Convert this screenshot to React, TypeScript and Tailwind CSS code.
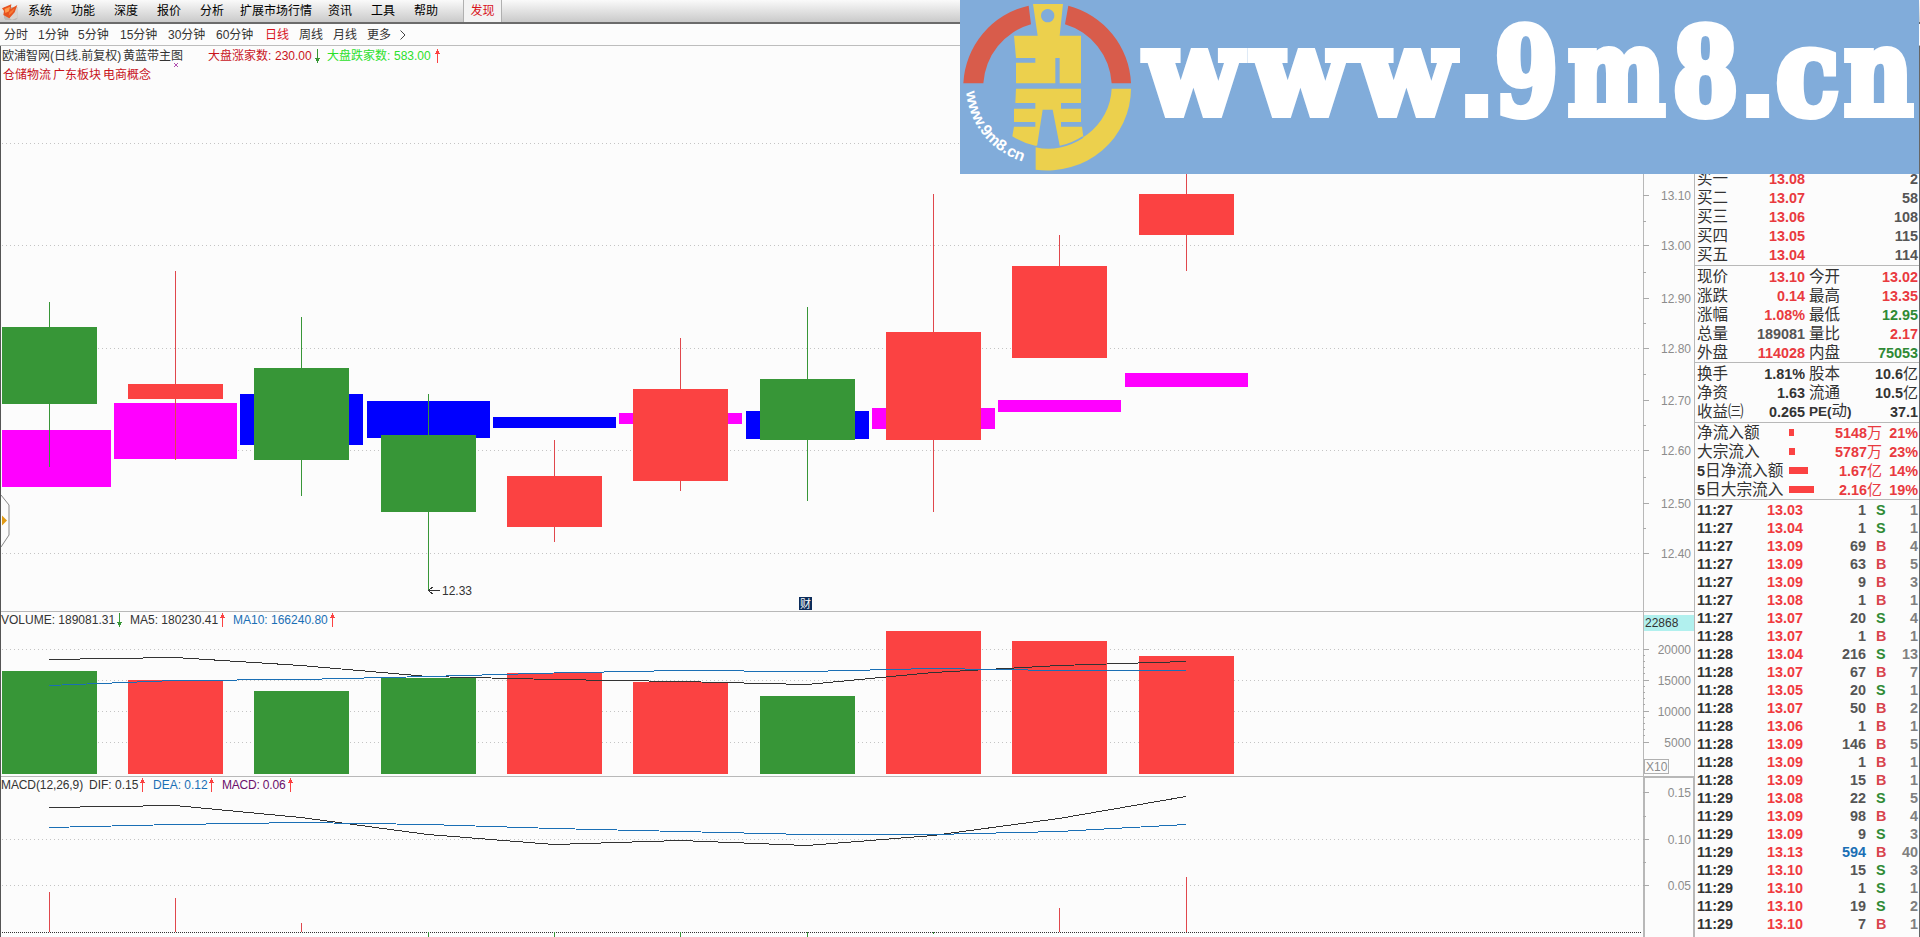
import clsx from "clsx";

const RED = "#fb4242";
const GREEN = "#379637";
const MAGENTA = "#ff00ff";
const BLUE = "#0000ff";

const menuItems = ["系统", "功能", "深度", "报价", "分析", "扩展市场行情", "资讯", "工具", "帮助"];

const periods = ["分时", "1分钟", "5分钟", "15分钟", "30分钟", "60分钟", "日线", "周线", "月线", "更多"];

// x = center, body/wick/band are [top, bottom] in page pixels
const candles = [
  { x: 49, up: false, body: [327, 404], wick: [302, 467], band: [430, 487], bandColor: MAGENTA, vol: 671, macd: [892, 932] },
  { x: 175, up: true, body: [384, 399], wick: [271, 460], band: [403, 459], bandColor: MAGENTA, vol: 680, macd: [898, 932] },
  { x: 301, up: false, body: [368, 460], wick: [317, 496], band: [394, 445], bandColor: BLUE, vol: 691, macd: [923, 932] },
  { x: 428, up: false, body: [435, 512], wick: [394, 591], band: [401, 438], bandColor: BLUE, vol: 678, macd: [932, 937] },
  { x: 554, up: true, body: [476, 527], wick: [440, 542], band: [417, 428], bandColor: BLUE, vol: 673, macd: [932, 937] },
  { x: 680, up: true, body: [389, 481], wick: [338, 491], band: [413, 424], bandColor: MAGENTA, vol: 682, macd: [932, 937] },
  { x: 807, up: false, body: [379, 440], wick: [307, 501], band: [411, 439], bandColor: BLUE, vol: 696, macd: [932, 937] },
  { x: 933, up: true, body: [332, 440], wick: [194, 512], band: [408, 429], bandColor: MAGENTA, vol: 631, macd: [932, 934] },
  { x: 1059, up: true, body: [266, 358], wick: [235, 358], band: [400, 412], bandColor: MAGENTA, vol: 641, macd: [908, 932] },
  { x: 1186, up: true, body: [194, 235], wick: [140, 271], band: [373, 387], bandColor: MAGENTA, vol: 656, macd: [877, 932] },
];

const ma5 = [659.5, 657.5, 665.5, 676.5, 679.5, 681.5, 684.5, 672.5, 665.5, 661.5];
const ma10 = [685.5, 680.5, 679.5, 676.5, 673, 670.5, 671.5, 668.5, 670.5, 670.5];
const dif = [807.5, 805.5, 817.5, 834.5, 844.5, 840.5, 845.5, 835.5, 818.5, 796.5];
const dea = [827.5, 824.5, 822.5, 824.5, 828.5, 831.5, 834.5, 834.5, 831.5, 824.5];

const toPoints = (ys: number[]) => ys.map((y, i) => `${candles[i].x},${y}`).join(" ");

const priceAxis: [string, number][] = [
  ["13.10", 195],
  ["13.00", 245],
  ["12.90", 298],
  ["12.80", 348],
  ["12.70", 400],
  ["12.60", 450],
  ["12.50", 503],
  ["12.40", 553],
];
const volAxis: [string, number][] = [
  ["20000", 649],
  ["15000", 680],
  ["10000", 711],
  ["5000", 742],
];
const macdAxis: [string, number][] = [
  ["0.15", 792],
  ["0.10", 839],
  ["0.05", 885],
];

const bids = [
  ["买一", "13.08", "2"],
  ["买二", "13.07", "58"],
  ["买三", "13.06", "108"],
  ["买四", "13.05", "115"],
  ["买五", "13.04", "114"],
];

const red = "text-[#e93a3f]";
const green = "text-[#2f8a35]";
const dark = "text-[#333]";

const quotes = [
  ["现价", "13.10", red, "今开", "13.02", red],
  ["涨跌", "0.14", red, "最高", "13.35", red],
  ["涨幅", "1.08%", red, "最低", "12.95", green],
  ["总量", "189081", "text-[#555]", "量比", "2.17", red],
  ["外盘", "114028", red, "内盘", "75053", green],
];

const basics = [
  ["换手", "1.81%", dark, "股本", "10.6亿", dark],
  ["净资", "1.63", dark, "流通", "10.5亿", dark],
  ["收益㈢", "0.265", dark, "PE(动)", "37.1", dark],
];

const flows = [
  { label: "净流入额", width: 5, value: "5148", unit: "万", pct: "21%" },
  { label: "大宗流入", width: 6, value: "5787", unit: "万", pct: "23%" },
  { label: "日净流入额", five: true, width: 19, value: "1.67", unit: "亿", pct: "14%" },
  { label: "日大宗流入", five: true, width: 25, value: "2.16", unit: "亿", pct: "19%" },
];

const ticks: [string, string, string, string, string][] = [
  ["11:27", "13.03", "1", "S", "1"],
  ["11:27", "13.04", "1", "S", "1"],
  ["11:27", "13.09", "69", "B", "4"],
  ["11:27", "13.09", "63", "B", "5"],
  ["11:27", "13.09", "9", "B", "3"],
  ["11:27", "13.08", "1", "B", "1"],
  ["11:27", "13.07", "20", "S", "4"],
  ["11:28", "13.07", "1", "B", "1"],
  ["11:28", "13.04", "216", "S", "13"],
  ["11:28", "13.07", "67", "B", "7"],
  ["11:28", "13.05", "20", "S", "1"],
  ["11:28", "13.07", "50", "B", "2"],
  ["11:28", "13.06", "1", "B", "1"],
  ["11:28", "13.09", "146", "B", "5"],
  ["11:28", "13.09", "1", "B", "1"],
  ["11:28", "13.09", "15", "B", "1"],
  ["11:29", "13.08", "22", "S", "5"],
  ["11:29", "13.09", "98", "B", "4"],
  ["11:29", "13.09", "9", "S", "3"],
  ["11:29", "13.13", "594", "B", "40"],
  ["11:29", "13.10", "15", "S", "3"],
  ["11:29", "13.10", "1", "S", "1"],
  ["11:29", "13.10", "19", "S", "2"],
  ["11:29", "13.10", "7", "B", "1"],
];

const Arrow = ({ down = false }: { down?: boolean }) => (
  <svg className="h-[14px] w-[5px] shrink-0" viewBox="0 0 5 14" shapeRendering="crispEdges">
    {down ? (
      <path d="M2 0h1v14h-1zM0 9h5v1h-5zM1 10h3v2h-3z" fill={GREEN} />
    ) : (
      <path d="M2 0h1v14h-1zM1 2h3v2h-3zM0 4h5v1h-5z" fill={RED} />
    )}
  </svg>
);

const GridLine = ({ y }: { y: number }) => (
  <line x1="2" x2="1640" y1={y + 0.5} y2={y + 0.5} stroke="#c4c4c4" strokeDasharray="1 3" />
);

const MenuBar = () => (
  <div className="flex h-6 items-center border-b-2 border-[#6b6b6b] bg-gradient-to-b from-[#fafafa] to-[#cacaca] text-xs text-black">
    <svg className="ml-[2px] h-[17px] w-4" viewBox="0 0 48 51">
      <path d="M6 12h40v34l-4 5H10l-4-6z" fill="#bdb9b5" />
      <path d="M40 10l6 4v30l-16 6-8-4z" fill="#d8d4d0" />
      <path d="M0 16L28 4l-2 14L46 6 38 28 22 46 4 36l2-12z" fill="#e8531f" />
      <path d="M8 18l16-7-3 14-11 5z" fill="#ff9a4e" />
      <path d="M22 28l16-12-6 12-12 10z" fill="#f67a35" />
    </svg>
    <div className="ml-[10px] grid grid-cols-[43px_43px_43px_43px_40px_88px_43px_43px_49px]">
      {menuItems.map((m) => (
        <span key={m}>{m}</span>
      ))}
    </div>
    <div className="flex h-full w-[39px] items-center justify-center border-x border-[#b0b0b0] bg-[#f3f3f3] text-[#d8141c]">
      发现
    </div>
  </div>
);

const PeriodBar = () => (
  <div className="flex h-[22px] items-center border-b border-[#bdbdbd] pl-1 text-xs text-[#333]">
    <div className="grid grid-cols-[34px_40px_42px_48px_48px_49px_34px_34px_34px_33px]">
      {periods.map((p) => (
        <span key={p} className={clsx(p === "日线" && "text-[#d8141c]")}>
          {p}
        </span>
      ))}
    </div>
    <svg className="h-[10px] w-[6px]" viewBox="0 0 6 10" fill="none" stroke="#444">
      <path d="M0.5 0.5L5 5L0.5 9.5" />
    </svg>
  </div>
);

const PricePane = () => (
  <div className="relative h-[566px] border-b border-[#b8b8b8]">
    <svg className="absolute inset-0" width="1642" height="565" viewBox="1 46 1642 565" shapeRendering="crispEdges">
      {[143, 245, 348, 450, 553].map((y) => (
        <GridLine key={y} y={y} />
      ))}
      {candles.map((c, i) => {
        const color = c.up ? RED : GREEN;
        const bandLeft = i === 0 ? 2 : c.x - 61;
        return (
          <g key={c.x}>
            <rect x={bandLeft} y={c.band[0]} width={c.x + 62 - bandLeft} height={c.band[1] - c.band[0]} fill={c.bandColor} />
            <rect x={c.x} y={c.wick[0]} width="1" height={c.wick[1] - c.wick[0]} fill={c.up ? "#e0474c" : color} />
            <rect x={c.x - 47} y={c.body[0]} width="95" height={c.body[1] - c.body[0]} fill={color} />
          </g>
        );
      })}
      {/* lowest price marker */}
      <path d="M429 590.5h11M432.5 587l-4 3.5 4 3.5" fill="none" stroke="#333" />
      <text x="442" y="595" fontSize="12" fill="#333">12.33</text>
      <rect x="799" y="597" width="13" height="13" fill="#0d2c5a" />
      <text x="800" y="608" fontSize="11" fill="#fff">财</text>
      {/* side drawer handle */}
      <path d="M1 495l8 10v30l-8 12" fill="#fcfcfc" stroke="#888" shapeRendering="auto" />
      <path d="M2 515.5l5 5-5 5z" fill="#e09a14" shapeRendering="auto" />
      <path d="M174 63l4 4M178 63l-4 4" stroke="#b050b0" shapeRendering="auto" />
    </svg>
    <div className="relative flex h-[19px] items-center pt-px text-xs text-[#333]">
      <span className="w-[122px] whitespace-nowrap pl-px">欧浦智网(日线.前复权)</span>
      <span className="w-[85px]">黄蓝带主图</span>
      <span className="w-[67px] text-[#c8141c]">大盘涨家数:</span>
      <span className="w-[40px] text-[#c8141c]">230.00</span>
      <Arrow down />
      <span className="ml-[7px] w-[67px] text-[#2be02b]">大盘跌家数:</span>
      <span className="w-[41px] text-[#2be02b]">583.00</span>
      <Arrow />
    </div>
    <div className="relative flex h-[19px] items-center gap-[2px] pl-[2px] text-xs text-[#c8141c]">
      <span>仓储物流</span>
      <span>广东板块</span>
      <span>电商概念</span>
    </div>
  </div>
);

const VolumePane = () => (
  <div className="relative h-[165px] border-b border-[#b8b8b8]">
    <svg className="absolute inset-0" width="1642" height="164" viewBox="1 612 1642 164" shapeRendering="crispEdges">
      {volAxis.map(([label, y]) => (
        <GridLine key={label} y={y} />
      ))}
      {candles.map((c) => (
        <rect key={c.x} x={c.x - 47} y={c.vol} width="95" height={774 - c.vol} fill={c.up ? RED : GREEN} />
      ))}
      <polyline points={toPoints(ma5)} fill="none" stroke="#333" />
      <polyline points={toPoints(ma10)} fill="none" stroke="#1a6fb5" />
    </svg>
    <div className="relative flex h-4 items-center whitespace-nowrap text-xs text-[#333]">
      <span className="w-[116px]">VOLUME: 189081.31</span>
      <Arrow down />
      <span className="ml-2 w-[90px]">MA5: 180230.41</span>
      <Arrow />
      <span className="ml-2 w-[97px] text-[#1a6fb5]">MA10: 166240.80</span>
      <Arrow />
    </div>
  </div>
);

const MacdPane = () => (
  <div className="relative h-[160px]">
    <svg className="absolute inset-0" width="1642" height="160" viewBox="1 777 1642 160" shapeRendering="crispEdges">
      <GridLine y={839} />
      <GridLine y={885} />
      <line x1="2" x2="1642" y1="932.5" y2="932.5" stroke="#333" strokeDasharray="1 1" />
      {candles.map((c) => (
        <rect
          key={c.x}
          x={c.x}
          y={c.macd[0]}
          width="1"
          height={c.macd[1] - c.macd[0]}
          fill={c.macd[0] >= 932 ? GREEN : "#e0474c"}
        />
      ))}
      <polyline points={toPoints(dif)} fill="none" stroke="#333" />
      <polyline points={toPoints(dea)} fill="none" stroke="#1a6fb5" />
    </svg>
    <div className="relative flex h-4 items-center whitespace-nowrap text-xs text-[#333]">
      <span className="w-[88px] tracking-[-0.1px]">MACD(12,26,9)</span>
      <span className="w-[51px]">DIF: 0.15</span>
      <Arrow />
      <span className="ml-2 w-[56px] text-[#1a6fb5]">DEA: 0.12</span>
      <Arrow />
      <span className="ml-2 w-[66px] tracking-[-0.2px] text-[#6b0f6b]">MACD: 0.06</span>
      <Arrow />
    </div>
  </div>
);

const AxisLabels = ({ items }: { items: [string, number][] }) => (
  <>
    {items.map(([label, y]) => (
      <g key={label}>
        <rect x="1640" y={y} width="9" height="1" fill="#aaa" />
        <text x="1691" y={y + 5} fontSize="12" textAnchor="end" fill="#8c8c8c">
          {label}
        </text>
      </g>
    ))}
  </>
);

const AxisColumn = () => (
  <svg className="shrink-0" width="51" height="891" viewBox="1643 46 51 891" shapeRendering="crispEdges">
    <rect x="1643" y="46" width="1" height="891" fill="#b8b8b8" />
    <rect x="1643" y="611" width="51" height="1" fill="#b8b8b8" />
    <AxisLabels items={priceAxis} />
    {[221, 272, 323, 374, 425, 477, 528].map((y) => (
      <rect key={y} x="1643" y={y} width="3" height="1" fill="#aaa" />
    ))}
    <rect x="1644" y="615" width="50" height="16" fill="#b1f0ee" />
    <text x="1645" y="627" fontSize="12" fill="#333">22868</text>
    <AxisLabels items={volAxis} />
    {[655, 661, 667, 673, 686, 692, 698, 704, 717, 723, 729, 735].map((y) => (
      <rect key={y} x="1643" y={y} width="2" height="1" fill="#aaa" />
    ))}
    <rect x="1644.5" y="759.5" width="24" height="14" fill="none" stroke="#b0b0b0" />
    <text x="1646" y="771" fontSize="12" fill="#8c8c8c">X10</text>
    <rect x="1643" y="776" width="51" height="2" fill="#b8b8b8" />
    <rect x="1643" y="776" width="2" height="161" fill="#b8b8b8" />
    <rect x="1693" y="776" width="1" height="161" fill="#b8b8b8" />
    <AxisLabels items={macdAxis} />
    {[816, 862].map((y) => (
      <rect key={y} x="1643" y={y} width="3" height="1" fill="#aaa" />
    ))}
  </svg>
);

const PairRow = ({ row }: { row: string[] }) => (
  <div className="grid h-[19px] grid-cols-[50px_58px_50px_1fr] items-center whitespace-nowrap">
    <span className="text-[15.5px]">{row[0]}</span>
    <span className={clsx("text-right font-bold", row[2])}>{row[1]}</span>
    <span className="pl-1 text-[15.5px]">
      {row[3].startsWith("PE") ? (
        <>
          <b className="text-[13.5px]">PE(</b>动<b className="text-[13.5px]">)</b>
        </>
      ) : (
        row[3]
      )}
    </span>
    <span className={clsx("pr-px text-right font-bold", row[5])}>
      {row[4].replace("亿", "")}
      {row[4].endsWith("亿") && <span className="text-[15px] font-normal">亿</span>}
    </span>
  </div>
);

const SidePanel = () => (
  <aside className="flex w-[226px] shrink-0 flex-col border-l border-r border-l-[#b8b8b8] border-r-[#666] pt-[123px] text-[14.4px] leading-[18px] text-[#333]">
    <div className="h-[97px] border-b border-[#b8b8b8] pl-[2px]">
      {bids.map(([label, price, qty]) => (
        <div key={label} className="grid h-[19px] grid-cols-[50px_58px_1fr] items-center">
          <span className="text-[15.5px]">{label}</span>
          <span className="text-right font-bold text-[#e93a3f]">{price}</span>
          <span className="pr-px text-right font-bold text-[#555]">{qty}</span>
        </div>
      ))}
    </div>
    <div className="h-[97px] border-b border-[#b8b8b8] pl-[2px] pt-px">
      {quotes.map((q) => (
        <PairRow key={q[0]} row={q} />
      ))}
    </div>
    <div className="h-[60px] border-b border-[#b8b8b8] pl-[2px] pt-px">
      {basics.map((b) => (
        <PairRow key={b[0]} row={b} />
      ))}
    </div>
    <div className="h-[77px] border-b border-[#b8b8b8] pl-[2px]">
      {flows.map((f) => (
        <div key={f.label} className="grid h-[19px] grid-cols-[92px_40px_53px_1fr] items-center whitespace-nowrap">
          <span className="text-[15.7px]">
            {f.five && <b className="text-[14.4px]">5</b>}
            {f.label}
          </span>
          <div className="h-[7px] bg-[#fb4242]" style={{ width: f.width }} />
          <span className="text-right font-bold text-[#e93a3f]">
            {f.value}
            <span className="text-[15px] font-normal">{f.unit}</span>
          </span>
          <span className="pr-px text-right font-bold text-[#e93a3f]">{f.pct}</span>
        </div>
      ))}
    </div>
    <div className="pt-px">
      {ticks.map(([time, price, vol, side, count], i) => (
        <div key={i} className="grid h-[18px] grid-cols-[61px_48px_60px_27px_1fr] items-center pl-[2px] pr-[1px] font-bold">
          <span>{time}</span>
          <span className="pr-[3px] text-right text-[#f03a40]">{price}</span>
          <span className={clsx("text-right", vol === "594" ? "text-[#1a6fb5]" : "text-[#555]")}>{vol}</span>
          <span className={clsx("pl-[10px]", side === "S" ? "text-[#2f8a35]" : "text-[#d8444c]")}>{side}</span>
          <span className="text-right text-[#808080]">{count}</span>
        </div>
      ))}
    </div>
  </aside>
);

const wordmark: [string, number, number][] = [
  ["w", 1145, 96],
  ["w", 1252, 96],
  ["w", 1358, 96],
  ["9", 1495, 63],
  ["m", 1568, 97],
  ["8", 1673, 65],
  ["c", 1776, 63],
  ["n", 1844, 69],
];

const Banner = () => (
  <svg className="absolute left-[960px] top-0" width="959" height="174" viewBox="960 0 959 174">
    <rect x="960" width="959" height="174" fill="#81acda" />
    <g transform="translate(955 0) scale(0.33333)">
      <path d="M25 250A252 252 0 0 1 221 17L228 73A196 196 0 0 0 85 250Z" fill="#d85c4b" />
      <path d="M528 250A252 252 0 0 0 340 17L330 73A196 196 0 0 1 470 250Z" fill="#d85c4b" />
      <path d="M528 266A251 246 0 0 1 242 509V440A193 184 0 0 0 470 266Z" fill="#ecd04d" />
      <path
        fillRule="evenodd"
        fill="#ecd04d"
        d="M234 12H324L314 107H378V250H314V174H301V250H183V188H241V174H183L177 107H248ZM278 27a20 20 0 1 0 .1 0Z"
      />
      <path
        d="M183 266H378V309H318V326H378V366H318V380H381L385 411Q352 435 315 442L293 329H263L246 439Q205 430 172 409L177 380H241V366H177V326H241V309H181Z"
        fill="#ecd04d"
      />
      <path d="M242 439Q278 448 315 440Q352 432 384 411" fill="none" stroke="#81acda" strokeWidth="5" />
      <path id="ring" d="M34 275A246 236 0 0 0 245 494" fill="none" />
      <text fontSize="47" fontWeight="bold" fill="#fff" className="font-['Liberation_Sans']">
        <textPath href="#ring" textLength="286" lengthAdjust="spacingAndGlyphs">
          www.9m8.cn
        </textPath>
      </text>
    </g>
    <g className="font-['DejaVu_Serif'] font-bold" fill="#fff" stroke="#fff" strokeWidth="8" fontSize="120">
      {wordmark.map(([ch, x, w]) => (
        <text key={x} x={x} y="114" textLength={w} lengthAdjust="spacingAndGlyphs">
          {ch}
        </text>
      ))}
    </g>
    <g className="font-['Liberation_Sans'] font-bold" fill="#fff" stroke="#fff" strokeWidth="6" fontSize="120">
      <text x="1460" y="115">.</text>
      <text x="1741" y="115">.</text>
    </g>
  </svg>
);

const App = () => (
  <div className="relative h-[937px] w-[1920px] overflow-hidden bg-[#fcfcfc] font-['Liberation_Sans','Noto_Sans_CJK_SC',sans-serif]">
    <MenuBar />
    <PeriodBar />
    <div className="flex h-[891px] border-l border-[#555]">
      <main className="w-[1642px] shrink-0">
        <PricePane />
        <VolumePane />
        <MacdPane />
      </main>
      <AxisColumn />
      <SidePanel />
    </div>
    <Banner />
  </div>
);

export default App;
